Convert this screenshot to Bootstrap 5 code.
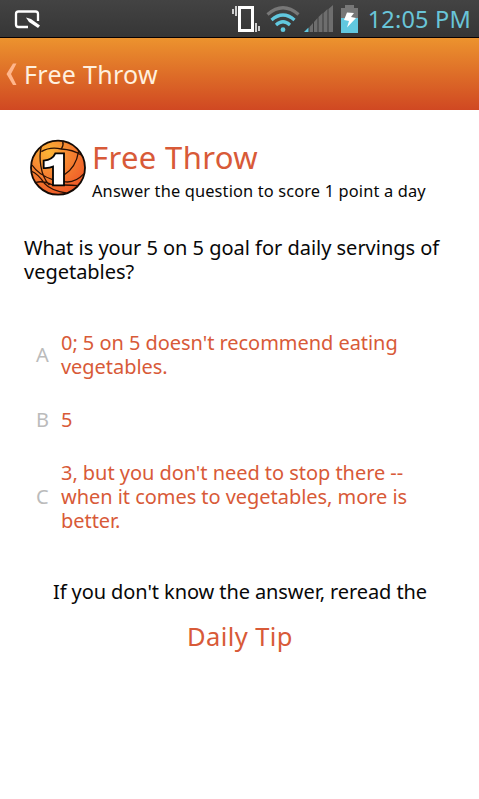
<!DOCTYPE html>
<html lang="en">
<head>
<meta charset="utf-8">
<meta name="viewport" content="width=device-width, initial-scale=1">
<title>Free Throw</title>
<link href="https://cdn.jsdelivr.net/npm/bootstrap@5.3.0/dist/css/bootstrap.min.css" rel="stylesheet">
<style>
body{font-family:"Noto Sans","Open Sans",sans-serif;color:#080808;background:#fff;height:799px;overflow:hidden}
.status{height:38px;background:linear-gradient(#434343,#363636);border-bottom:1px solid #080000}
.clock{color:#69c5d8;font-size:23.5px;line-height:37px;letter-spacing:.2px;padding:2px 8px 0 0}
.titlebar{height:72px;background:linear-gradient(#ec932e,#d04822)}
.titletext{color:#fff0df;font-size:25px;letter-spacing:.3px;line-height:36px}
.brick{color:#d85a38}
.intro{padding:26px 0 0 20px}
.heading{font-size:31px;line-height:42px;letter-spacing:.35px;margin:0;font-weight:400}
.subline{font-size:16.4px;line-height:26px;letter-spacing:.14px}
.question{font-size:20px;line-height:24px;padding:32px 0 0 24px;letter-spacing:-.02px}
.choices{padding:47px 0 0 24px;font-size:20px;line-height:24px;letter-spacing:-.045px}
.choice{margin-bottom:29px}
.letter{color:#bbb;width:37px;padding-left:12px}
.hint{font-size:20px;line-height:24px;letter-spacing:-.09px;padding:18px 0 0 1px;margin:0}
.tip{font-size:25.5px;line-height:34px;letter-spacing:.4px;margin-top:15px;padding-left:1px}
</style>
</head>
<body>
<header class="status d-flex align-items-center justify-content-between">
<svg width="60" height="37" viewBox="0 0 60 37" class="flex-shrink-0">
<path d="M28 27H18.500Q16 27 16 24.500V14Q16 11.500 18.500 11.500H35.500Q38 11.500 38 14V21" fill="none" stroke="#fff" stroke-width="2.300"/>
<path d="M26 17.500L31 19L40 25.500L38 28L29 22Z" fill="#fff"/>
</svg>
<div class="d-flex align-items-center">
<svg width="137" height="37" viewBox="230 0 137 37" class="flex-shrink-0">
<rect x="238.500" y="7.500" width="13" height="23" fill="none" stroke="#fff" stroke-width="3"/>
<path d="M232 9V14M235 6V16M255 23V32M258 26V31" stroke="#fff" stroke-width="1.500"/>
<g fill="none" stroke-width="3.200"><path d="M266.500 14.500Q282 1 297.500 14.500" stroke="#777"/><path d="M270.500 20Q282 10 293.500 20M275 25Q282 18.500 289 25" stroke="#61c8df"/></g><circle cx="282" cy="29.700" r="2.400" fill="#61c8df"/>
<path d="M303 32L307.500 27.500V32Z" fill="#61c8df"/><path d="M308.500 27L312 23V32H308.500ZM313 22L316.500 18V32H313ZM317.500 17L321.500 13V32H317.500ZM322.500 13L326.500 9V32H322.500ZM327.500 9L332 5V32H327.500Z" fill="#6e6e6e"/>
<path d="M340 8H344V5H353V8H357V18H340Z" fill="#777"/><path d="M340 18H357V33H340Z" fill="#61c8df"/><path d="M346 12.500L353 13L350 17L355 18L346 27.500L348 21L343 20Z" fill="#fff"/>
</svg>
<span class="clock text-nowrap">12:05 PM</span>
</div>
</header>
<nav class="titlebar d-flex align-items-center">
<svg width="24" height="72" viewBox="0 0 24 72" class="flex-shrink-0"><path d="M13 25.500H16.500L11 36L16.500 47H13L6.500 36Z" fill="#ffb68c"/></svg>
<span class="titletext text-nowrap">Free Throw</span>
</nav>
<main>
<section class="intro d-flex">
<svg class="flex-shrink-0" width="72" height="67" viewBox="0 17 216 201">
<defs><radialGradient id="ball" cx=".33" cy=".22" r=".85"><stop stop-color="#fcb535"/><stop offset=".4" stop-color="#f68a32"/><stop offset="1" stop-color="#ee5526"/></radialGradient></defs>
<circle cx="114" cy="112" r="81" fill="url(#ball)" stroke="#120a05" stroke-width="5.500"/>
<g fill="none" stroke="#2a1005" stroke-width="4"><path d="M64 47C56 80 60 135 88 164M64 64Q90 48 124 56Q158 58 184 74M124 56Q132 44 128 32M176 62Q168 112 132 134M33 122Q54 130 74 160Q92 180 138 188M36 104Q56 134 98 148M132 154Q164 160 192 130M48 156Q70 150 98 164M132 164Q156 164 174 166"/></g>
<path d="M106 69H132V165H99V109Q88 114 71 113V91Q98 88 106 69Z" fill="#fff" stroke="#050505" stroke-width="5.500"/>
</svg>
<div><h1 class="heading brick text-nowrap">Free Throw</h1>
<div class="subline text-nowrap">Answer the question to score 1 point a day</div></div>
</section>
<div class="question text-nowrap">What is your 5 on 5 goal for daily servings of<br>vegetables?</div>
<div class="choices text-nowrap">
<div class="choice d-flex align-items-center"><span class="letter">A</span><span class="brick">0; 5 on 5 doesn't recommend eating<br>vegetables.</span></div>
<div class="choice d-flex align-items-center"><span class="letter">B</span><span class="brick">5</span></div>
<div class="choice d-flex align-items-center"><span class="letter">C</span><span class="brick">3, but you don't need to stop there --<br>when it comes to vegetables, more is<br>better.</span></div>
</div>
<p class="hint text-center text-nowrap">If you don't know the answer, reread the</p>
<div class="tip brick text-center">Daily Tip</div>
</main>
<script src="https://cdn.jsdelivr.net/npm/bootstrap@5.3.0/dist/js/bootstrap.bundle.min.js"></script>
</body>
</html>
